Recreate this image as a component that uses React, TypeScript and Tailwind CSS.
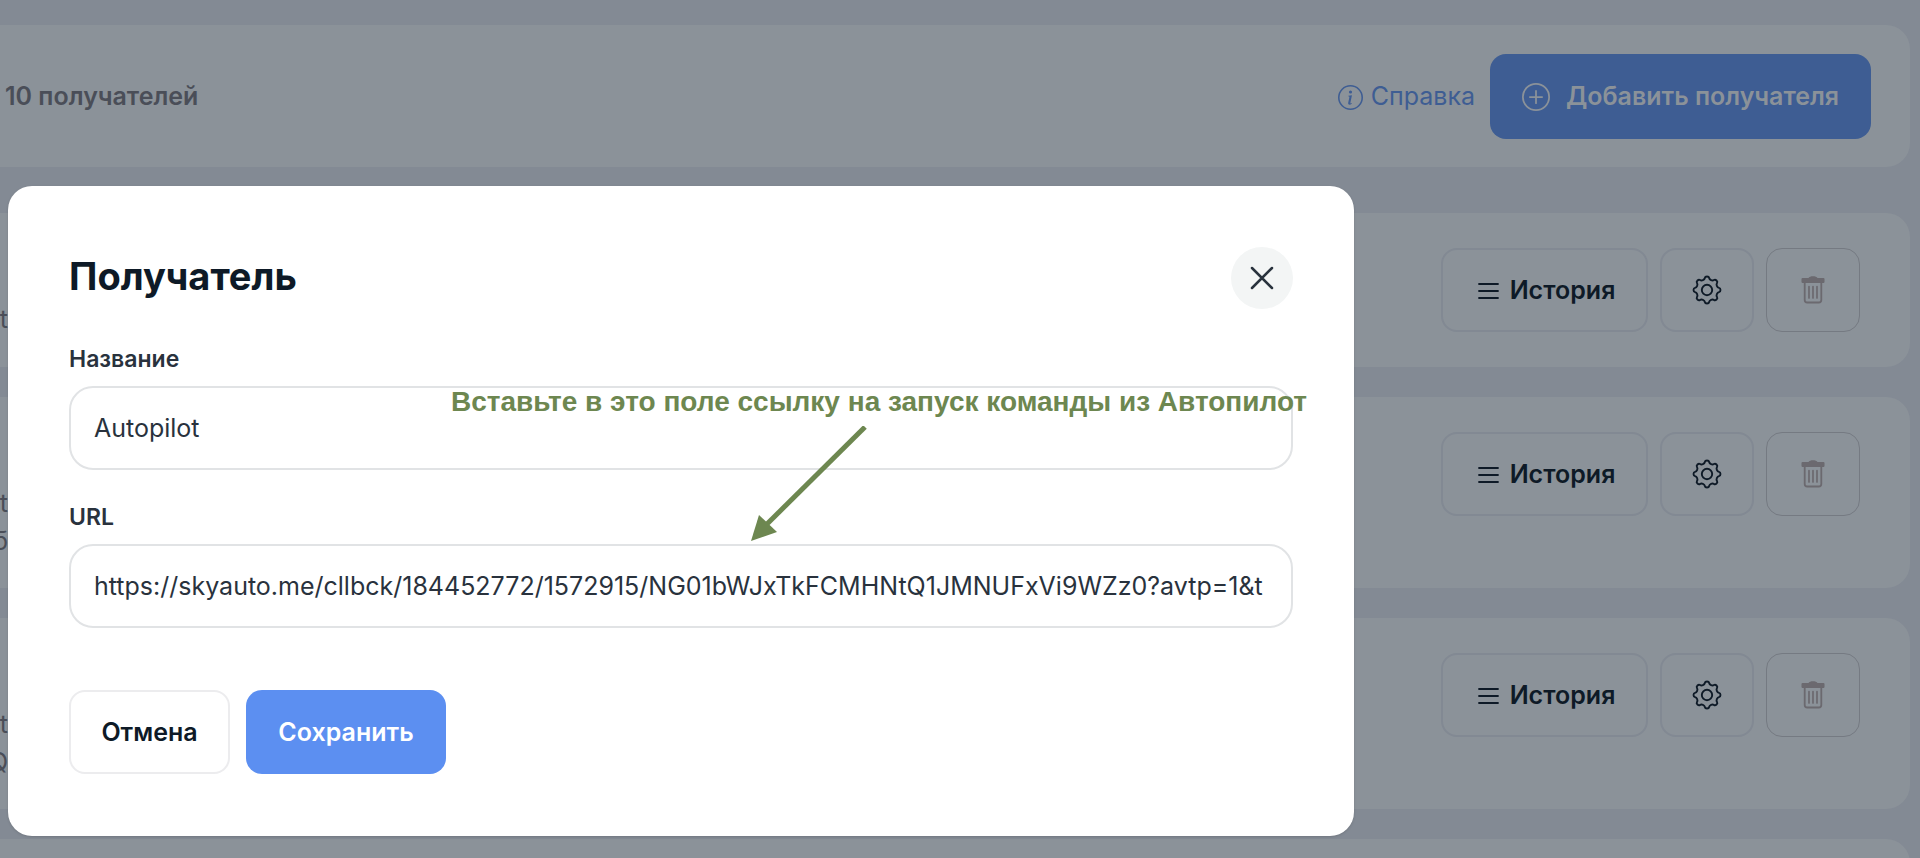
import React from 'react';
import { BsInfoCircle, BsPlusCircle } from 'react-icons/bs';

const rows = [
  { id: 1, lines: ['t'], height: 'h-[154px]' },
  { id: 2, lines: ['t', 'б'], height: 'h-[191px]' },
  { id: 3, lines: ['t', 'Q'], height: 'h-[191px]' },
  { id: 4, lines: [], height: 'h-[154px]' },
];

// Outline of an eight-tooth gear with rounded tips and valleys
const gearPath = (() => {
  const points: [number, number][] = [];
  for (let i = 0; i < 8; i++) {
    for (const [angle, r] of [[-8, 13.6], [8, 13.6], [13, 10.8], [32, 10.8]]) {
      const a = ((i * 45 + angle) * Math.PI) / 180;
      points.push([15 + r * Math.cos(a), 15 + r * Math.sin(a)]);
    }
  }
  const mid = (i: number) => {
    const [a, b] = [points[i % 32], points[(i + 1) % 32]];
    return `${((a[0] + b[0]) / 2).toFixed(2)} ${((a[1] + b[1]) / 2).toFixed(2)}`;
  };
  const curves = points.map((_, i) => {
    const p = points[(i + 1) % 32];
    return `Q${p[0].toFixed(2)} ${p[1].toFixed(2)} ${mid(i + 1)}`;
  });
  return `M${mid(0)}${curves.join('')}Z`;
})();

const GearIcon: React.FC = () => (
  <svg width="30" height="30" viewBox="0 0 30 30" fill="none" stroke="currentColor" strokeWidth="1.900" aria-hidden="true">
    <path d={gearPath} />
    <circle cx="15" cy="15" r="5.200" />
  </svg>
);

const ListIcon: React.FC = () => (
  <svg width="21" height="18" viewBox="0 0 21 18" fill="none" stroke="currentColor" strokeWidth="1.800" strokeLinecap="round" aria-hidden="true">
    <path d="M1 2h19M1 9h19M1 16h19" />
  </svg>
);

const TrashIcon: React.FC = () => (
  <svg width="24" height="28" viewBox="0 0 24 28" fill="none" stroke="currentColor" aria-hidden="true">
    <path d="M7.500 2c1-2.200 8-2.200 9 0h6a1 1 0 0 1 1 1v3a1.200 1.200 0 0 1-1 1h-21a1.200 1.200 0 0 1-1-1V3a1 1 0 0 1 1-1z" fill="currentColor" stroke="none" />
    <path d="M3.700 6v18a2.500 2.500 0 0 0 2.500 2.500h11.600a2.500 2.500 0 0 0 2.500-2.500V6" strokeWidth="1.800" />
    <path d="M8 10.500v11.500M12 10.500v11.500M16 10.500v11.500" strokeWidth="1.700" strokeLinecap="round" />
  </svg>
);

const CloseIcon: React.FC = () => (
  <svg width="24" height="24" viewBox="0 0 24 24" fill="none" stroke="currentColor" strokeWidth="2.500" strokeLinecap="round" aria-hidden="true">
    <path d="m2 2 20 20M22 2 2 22" />
  </svg>
);

const Row: React.FC<{ lines: string[]; height: string }> = ({ lines, height }) => (
  <li className={`flex items-start justify-between rounded-r-3xl bg-[#8b9299] pt-[35px] pr-[50px] ${height}`}>
    <div className="flex w-2 justify-end pt-[52px] text-[25px] leading-[38px] text-[#4a4e58]">
      <div className="text-right">
        {lines.map((line) => (
          <div key={line}>{line}</div>
        ))}
      </div>
    </div>
    <div className="flex gap-3">
      <button type="button" className="flex h-[84px] w-[207px] items-center justify-center gap-[11px] rounded-2xl border-2 border-[#828993] pt-[2px] pl-1 text-[25px] font-semibold text-[#0e1a27]">
        <ListIcon />
        История
      </button>
      <button type="button" aria-label="Настройки" className="flex h-[84px] w-[94px] items-center justify-center rounded-2xl border-2 border-[#828993] text-[#0e1a27]">
        <GearIcon />
      </button>
      <button type="button" aria-label="Удалить" className="flex h-[84px] w-[94px] items-center justify-center rounded-2xl border border-[#757a82] text-[#6b696f]">
        <TrashIcon />
      </button>
    </div>
  </li>
);

const inputClass =
  'mt-1 block h-[84px] w-full rounded-3xl border-2 border-[#e1e3e5] px-[23px] text-[25px] text-[#29323d] outline-none';

const RecipientDialog: React.FC = () => (
  <div role="dialog" aria-labelledby="dialog-title" className="absolute top-[186px] left-2 w-[1346px] rounded-3xl bg-white px-[61px] pt-[61px] pb-[62px] shadow-sm">
    <div className="flex items-start justify-between">
      <h2 id="dialog-title" className="text-[38px] leading-[58px] font-bold text-[#0e1a27]">Получатель</h2>
      <button type="button" aria-label="Закрыть" className="flex size-[62px] items-center justify-center rounded-full bg-[#f3f5f5] text-[#29323d]">
        <CloseIcon />
      </button>
    </div>
    <form>
      <label htmlFor="name" className="mt-[30px] mb-[7px] block text-[23px] leading-10 font-semibold text-[#29323d]">Название</label>
      <input id="name" type="text" defaultValue="Autopilot" className={inputClass} />
      <label htmlFor="url" className="mt-[27px] mb-[7px] block text-[23px] leading-10 font-semibold text-[#29323d]">URL</label>
      <input id="url" type="text" defaultValue="https://skyauto.me/cllbck/184452772/1572915/NG01bWJxTkFCMHNtQ1JMNUFxVi9WZz0?avtp=1&t" className={inputClass} />
      <div className="mt-[62px] flex gap-4">
        <button type="button" className="h-[84px] w-[161px] rounded-2xl border-2 border-[#ececee] pt-[2px] text-[25px] font-semibold text-[#0e1a27]">Отмена</button>
        <button type="submit" className="h-[84px] w-[200px] rounded-2xl bg-[#5c8ff1] pt-[2px] text-[25px] font-semibold text-white">Сохранить</button>
      </div>
    </form>

    {/* Hint pointing at the URL field */}
    <p className="absolute top-[200px] left-[443px] font-['Liberation_Sans'] text-[28px] leading-8 font-bold whitespace-nowrap text-[#6d8750]">
      Вставьте в это поле ссылку на запуск команды из Автопилот
    </p>
    <svg className="absolute top-[240px] left-[742px]" width="120" height="116" viewBox="0 0 120 116" aria-hidden="true">
      <path d="M115 1 16 99" stroke="#6d8750" strokeWidth="5" />
      <path d="M1 115 9 89 27 106z" fill="#6d8750" />
    </svg>
  </div>
);

export default function App() {
  return (
    <div className="relative h-screen overflow-hidden bg-[#838a94] pt-[25px] pr-2.5 font-[Inter,sans-serif]">
      <header className="flex h-[142px] items-center justify-between rounded-r-3xl bg-[#8b9299] pr-[39px] pl-[5px]">
        <span className="pt-[2px] text-[25px] font-semibold text-[#4a4e58]">10 получателей</span>
        <div className="flex items-center gap-[15px]">
          <a href="#help" className="flex items-center gap-2 pt-[2px] text-[25px] text-[#3e5d93]">
            <BsInfoCircle className="size-[25px]" />
            Справка
          </a>
          <button type="button" className="flex h-[85px] w-[381px] items-center justify-center gap-4 rounded-2xl bg-[#3e5d93] pt-[2px] text-[25px] font-semibold text-[#8b9299]">
            <BsPlusCircle className="size-[28px]" />
            Добавить получателя
          </button>
        </div>
      </header>
      <ul className="mt-[46px] flex flex-col gap-[30px]">
        {rows.map((row) => (
          <Row key={row.id} lines={row.lines} height={row.height} />
        ))}
      </ul>
      <RecipientDialog />
    </div>
  );
}
